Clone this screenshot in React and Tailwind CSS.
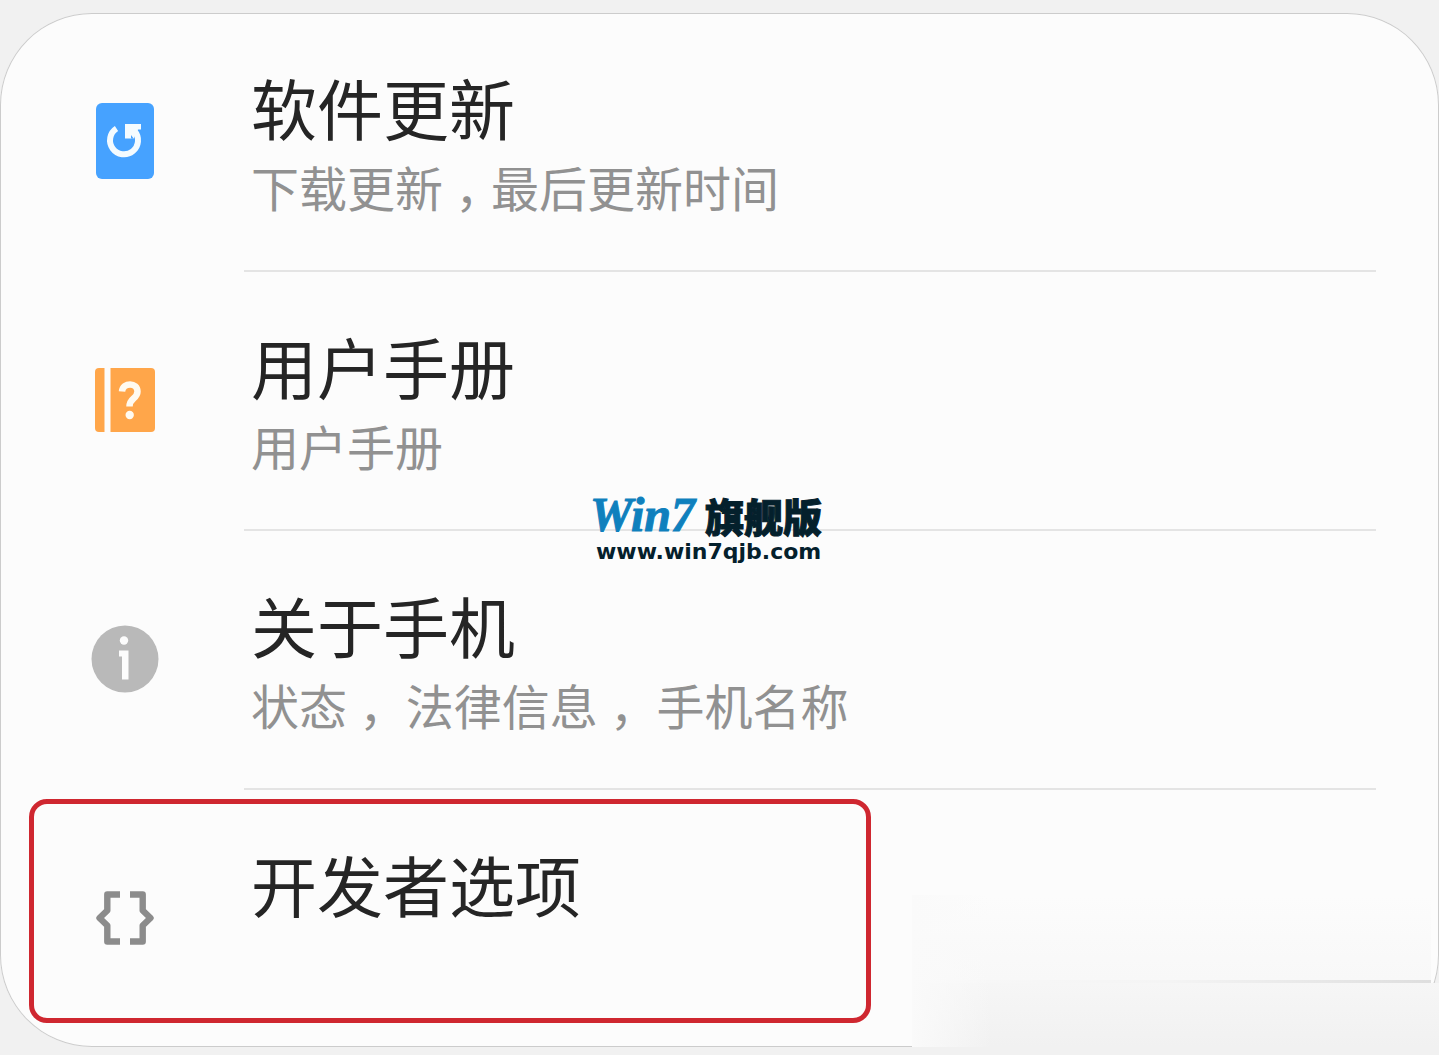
import React from 'react';

const UpdateIcon = () => (
  <svg viewBox="0 0 58 76" className="w-[58px] h-[76px]" aria-hidden="true">
    <rect width="58" height="76" rx="6" fill="#46a2ff" />
    <path d="M20.500 25.500 A14 14 0 1 0 38.500 28" fill="none" stroke="#f4fbff" strokeWidth="6" />
    <path d="M29 21 H45 V26.500 H42 L37.500 36 L34.500 35.500 H29 Z" fill="#f4fbff" />
    <path d="M35 35.500 V32 L38 36 Z" fill="#46a2ff" />
  </svg>
);

const ManualIcon = () => (
  <svg viewBox="0 0 60 64" className="w-[60px] h-16" aria-hidden="true">
    <path d="M9.500 0 V64 H4 Q0 64 0 60 V4 Q0 0 4 0 Z" fill="#ffa64a" />
    <path d="M15.500 0 H56 Q60 0 60 4 V60 Q60 64 56 64 H15.500 Z" fill="#ffa64a" />
    <path d="M27 23.500 C28 14 42.500 14 42.500 23.500 C42.500 31 34.500 29.500 34.500 38.500" fill="none" stroke="#fffaf0" strokeWidth="6.500" />
    <circle cx="34.700" cy="47" r="4.200" fill="#fffaf0" />
  </svg>
);

const AboutIcon = () => (
  <svg viewBox="0 0 68 68" className="w-[68px] h-[68px]" aria-hidden="true">
    <circle cx="34" cy="34" r="33.500" fill="#b9b9b9" />
    <circle cx="33" cy="15.500" r="4.200" fill="#fcfcfc" />
    <path d="M28 25.500 H37.500 V54.500 H31 V31.500 H28 Z" fill="#fcfcfc" />
  </svg>
);

const DeveloperIcon = () => (
  <svg viewBox="0 0 58 54" className="w-[58px] h-[54px]" aria-hidden="true">
    <g fill="none" stroke="#8c8c8c" strokeWidth="6.400" strokeLinejoin="round">
      <path d="M24 3.500 H11.300 V19.500 L3.500 27 L11.300 34.500 V50.500 H24" />
      <path d="M34 3.500 H46.700 V19.500 L54.500 27 L46.700 34.500 V50.500 H34" />
    </g>
  </svg>
);

// Half-width comma with even space on both sides
const Comma = () => <span className="inline-block px-3 [font-feature-settings:'halt']">，</span>;

const settings = [
  { id: 'update', title: '软件更新', icon: UpdateIcon, summary: <>下载更新<Comma />最后更新时间</> },
  { id: 'manual', title: '用户手册', icon: ManualIcon, summary: '用户手册' },
  { id: 'about', title: '关于手机', icon: AboutIcon, summary: <>状态<Comma /> 法律信息<Comma /> 手机名称</> },
  { id: 'developer', title: '开发者选项', icon: DeveloperIcon, highlighted: true },
];

const SettingRow = ({ item }) => {
  const Icon = item.icon;

  return (
    <li className="relative">
      <a href={`#${item.id}`} className="flex h-[257px]">
        <span className="flex w-[250px] shrink-0 items-center justify-center pb-0.5">
          <Icon />
        </span>
        <span className="flex flex-col pt-[49px] pl-px">
          <span className="text-[66px] leading-[88px] text-[#252525]">{item.title}</span>
          {item.summary && (
            <span className="whitespace-nowrap text-[48px] leading-[72px] text-[#919191]">{item.summary}</span>
          )}
        </span>
      </a>
      {item.highlighted && (
        <div className="pointer-events-none absolute left-[29px] top-[9px] h-[224px] w-[842px] rounded-[18px] border-[5px] border-[#cf2730]" />
      )}
    </li>
  );
};

const Watermark = () => (
  <div className="pointer-events-none absolute left-[41%] top-[491px] whitespace-nowrap text-[#04202c]">
    <div className="flex items-center gap-2.5">
      <span className="font-['Liberation_Serif',serif] text-[48px] font-bold italic leading-[48px] text-[#0f80bd] [-webkit-text-stroke:1px_#0f80bd]">Win7</span>
      <span className="text-[39px] font-black leading-[48px] [-webkit-text-stroke:1px_#04202c]">旗舰版</span>
    </div>
    <div className="pl-1.5 pt-px font-['DejaVu_Sans',sans-serif] text-[22px] font-bold leading-6">www.win7qjb.com</div>
  </div>
);

// Soft patch that fades the lower right corner of the card into the page
const CornerFade = () => (
  <div className="pointer-events-none absolute bottom-2 right-0 flex h-[152px] w-[527px] flex-col">
    <div className="mr-2 h-[85px] bg-linear-to-b from-[#fcfcfc] to-[#f8f8f8]" />
    <div className="mr-2 h-[3px] bg-linear-to-r from-[#f8f8f8] via-[#f4f4f4] to-[#dedede]" />
    <div className="h-16 bg-linear-to-b from-[#f6f6f6] to-[#f1f1f1]" />
    <div className="absolute bottom-0 left-0 h-full w-20 bg-linear-to-r from-[#fafafa] to-transparent" />
  </div>
);

const App = () => {
  return (
    <div className="relative min-h-screen bg-[#f1f1f1] pt-[13px] pb-2 font-['Noto_Sans_CJK_SC',sans-serif]" lang="zh-CN">
      <main className="overflow-hidden rounded-[92px] bg-[#fcfcfc] shadow-[inset_0_0_0_1px_#cccccc]">
        <ul>
          {settings.map((item, index) => (
            <React.Fragment key={item.id}>
              {index > 0 && <li role="separator" className="ml-[244px] mr-[63px] h-0.5 bg-[#e4e4e4]" />}
              <SettingRow item={item} />
            </React.Fragment>
          ))}
        </ul>
      </main>
      <CornerFade />
      <Watermark />
    </div>
  );
};

export default App;
